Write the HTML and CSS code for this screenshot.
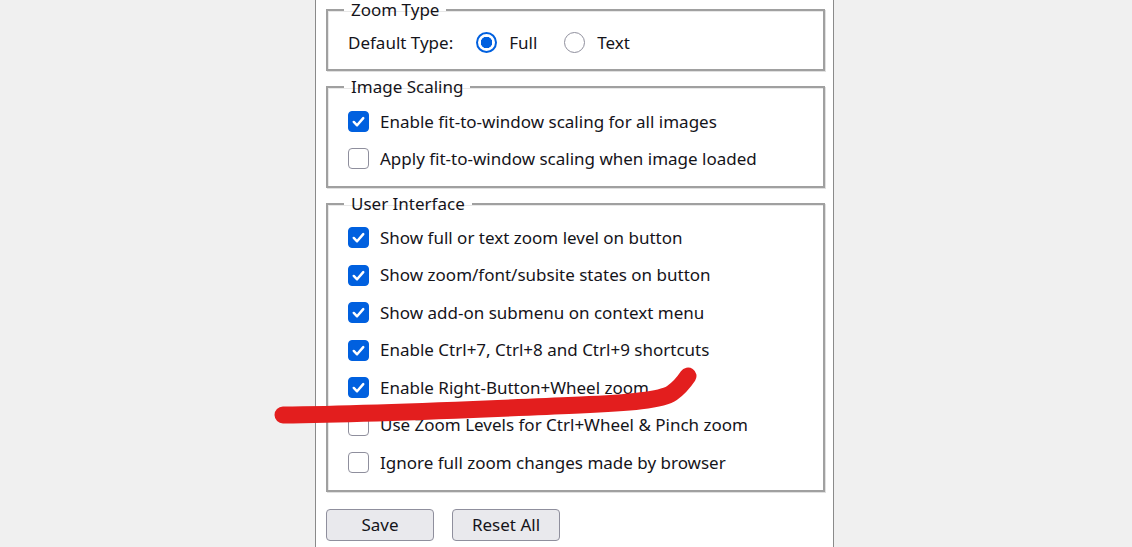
FILE: index.html
```html
<!DOCTYPE html>
<html>
<head>
<meta charset="utf-8">
<link rel="stylesheet" href="styles.css">
</head>
<body>
<div class="panel">
  <fieldset class="group g1">
    <legend>Zoom Type</legend>
    <div class="row radios">
      <span class="label">Default Type:</span>
      <span class="radio on"></span><span class="rtext">Full</span>
      <span class="radio"></span><span class="rtext">Text</span>
    </div>
  </fieldset>
  <fieldset class="group g2">
    <legend>Image Scaling</legend>
    <div class="row"><span class="box on"><svg viewBox="0 0 20 20"><path d="M5 10.5 L8.5 14 L15 6.5"/></svg></span><span>Enable fit-to-window scaling for all images</span></div>
    <div class="row"><span class="box"></span><span>Apply fit-to-window scaling when image loaded</span></div>
  </fieldset>
  <fieldset class="group g3">
    <legend>User Interface</legend>
    <div class="row"><span class="box on"><svg viewBox="0 0 20 20"><path d="M5 10.5 L8.5 14 L15 6.5"/></svg></span><span>Show full or text zoom level on button</span></div>
    <div class="row"><span class="box on"><svg viewBox="0 0 20 20"><path d="M5 10.5 L8.5 14 L15 6.5"/></svg></span><span>Show zoom/font/subsite states on button</span></div>
    <div class="row"><span class="box on"><svg viewBox="0 0 20 20"><path d="M5 10.5 L8.5 14 L15 6.5"/></svg></span><span>Show add-on submenu on context menu</span></div>
    <div class="row"><span class="box on"><svg viewBox="0 0 20 20"><path d="M5 10.5 L8.5 14 L15 6.5"/></svg></span><span>Enable Ctrl+7, Ctrl+8 and Ctrl+9 shortcuts</span></div>
    <div class="row"><span class="box on"><svg viewBox="0 0 20 20"><path d="M5 10.5 L8.5 14 L15 6.5"/></svg></span><span>Enable Right-Button+Wheel zoom</span></div>
    <div class="row"><span class="box"></span><span>Use Zoom Levels for Ctrl+Wheel &amp; Pinch zoom</span></div>
    <div class="row"><span class="box"></span><span>Ignore full zoom changes made by browser</span></div>
  </fieldset>
  <div class="buttons">
    <button class="btn">Save</button>
    <button class="btn">Reset All</button>
  </div>
</div>
<svg class="scribble" width="1132" height="547" viewBox="0 0 1132 547">
  <path d="M283 415 C 380 414, 480 409, 580 405 C 630 403, 662 400, 672 393 C 679 388, 684 382, 688 376"/>
</svg>
</body>
</html>
```
FILE: styles.css
```css
html, body {
  margin: 0;
  padding: 0;
}
body {
  background: #f0f0f0;
  font-family: "Noto Sans", "Open Sans", sans-serif;
  font-size: 17px;
  color: #15141a;
  height: 547px;
  overflow: hidden;
  position: relative;
}
.panel {
  margin-left: 315px;
  width: 519px;
  height: 547px;
  box-sizing: border-box;
  background: #fff;
  border-left: 1px solid #8a8a8a;
  border-right: 1px solid #8a8a8a;
  padding: 0 10px 0 10px;
}
.group {
  margin: 0 0 6px 0;
  width: 499px;
  box-sizing: border-box;
  border: 2px solid #a0a0a0;
  box-shadow: inset 1px 1px 0 #e8e8e8, 1px 1px 0 #e0e0e0;
  padding: 5px 20px 8px 20px;
  min-inline-size: 0;
}
.group legend {
  line-height: 20px;
  padding: 0 7px;
  margin-left: -4px;
}
.row {
  display: flex;
  align-items: center;
  height: 37.5px;
  line-height: 20px;
}
.g1 {
  padding-top: 4px;
  padding-bottom: 8px;
}
.g1 .row {
  height: 37px;
}
.g2 .row {
  height: 37px;
}
.g2 {
  padding-top: 6px;
  padding-bottom: 9px;
}
.label {
  margin-right: 23px;
}
.radio {
  width: 21px;
  height: 21px;
  box-sizing: border-box;
  border-radius: 50%;
  border: 1px solid #8f8f9d;
  margin-right: 12px;
  flex: none;
}
.radio.on {
  border: 2px solid #0060df;
  background: radial-gradient(circle, #0060df 0 5.5px, #fff 6px);
}
.rtext {
  margin-right: 27px;
}
.box {
  width: 21px;
  height: 21px;
  box-sizing: border-box;
  border-radius: 4px;
  border: 1px solid #8f8f9d;
  margin-right: 11px;
  flex: none;
  display: flex;
}
.box.on {
  background: #0060df;
  border-color: #0060df;
}
.box svg {
  width: 19px;
  height: 19px;
}
.box svg path {
  fill: none;
  stroke: #fff;
  stroke-width: 2.6;
  stroke-linecap: round;
  stroke-linejoin: round;
}
.buttons {
  display: flex;
  gap: 18px;
  margin-top: 17px;
}
.btn {
  width: 108px;
  height: 32px;
  font: inherit;
  color: #15141a;
  background: #e9e9ed;
  border: 1px solid #8f8f9d;
  border-radius: 4px;
  padding: 0;
}
.scribble {
  position: absolute;
  left: 0;
  top: 0;
  pointer-events: none;
}
.scribble path {
  fill: none;
  stroke: #e31e1e;
  stroke-width: 17;
  stroke-linecap: round;
  stroke-linejoin: round;
}
```
